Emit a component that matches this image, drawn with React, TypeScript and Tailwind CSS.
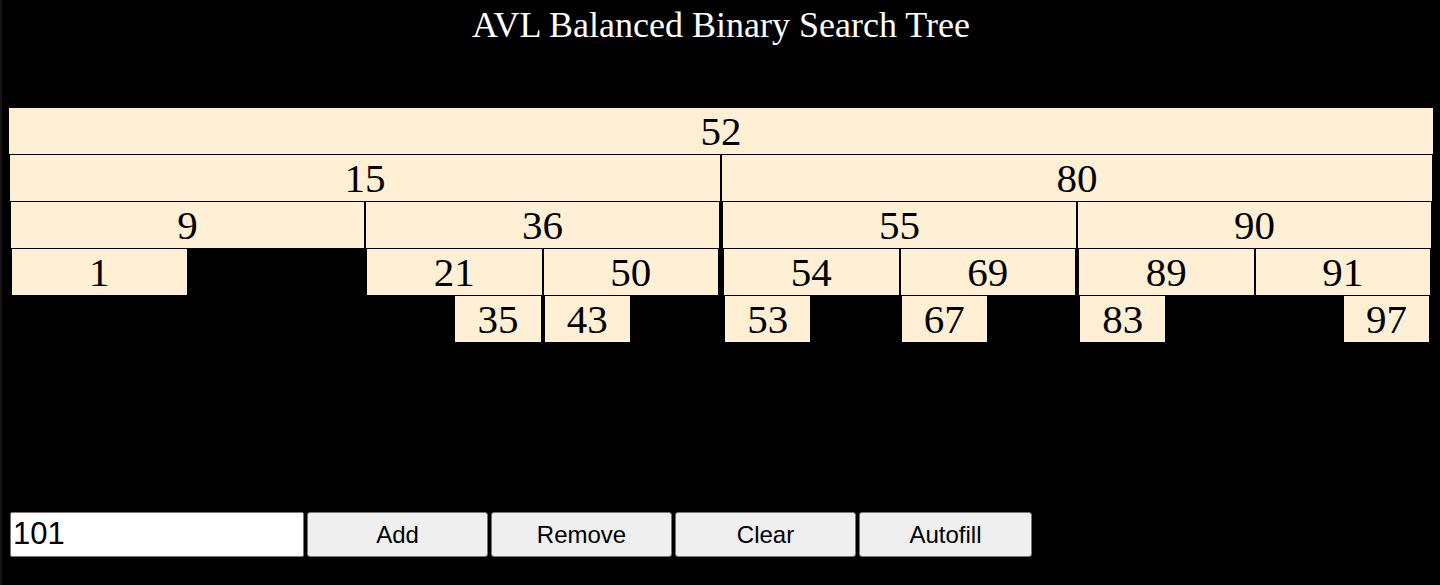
import React from "react";

type T = { v: number; l?: T; r?: T };

const tree: T = {
  v: 52,
  l: {
    v: 15,
    l: { v: 9, l: { v: 1 } },
    r: {
      v: 36,
      l: { v: 21, r: { v: 35 } },
      r: { v: 50, l: { v: 43 } },
    },
  },
  r: {
    v: 80,
    l: {
      v: 55,
      l: { v: 54, l: { v: 53 } },
      r: { v: 69, l: { v: 67 } },
    },
    r: {
      v: 90,
      l: { v: 89, l: { v: 83 } },
      r: { v: 91, r: { v: 97 } },
    },
  },
};

function Label({ v }: { v: number }) {
  return (
    <div className="h-[46px] bg-[#ffefd5] text-center text-[41px] leading-[46px] text-black">
      {v}
    </div>
  );
}

function Children({ n }: { n: T }) {
  if (!n.l && !n.r) return null;
  return (
    <div className="flex">
      {n.l ? <Node n={n.l} /> : <div className="w-1/2" />}
      {n.r ? <Node n={n.r} /> : <div className="w-1/2" />}
    </div>
  );
}

function Node({ n }: { n: T }) {
  return (
    <div className="w-1/2 border border-black">
      <Label v={n.v} />
      <Children n={n} />
    </div>
  );
}

export default function App() {
  return (
    <div
      className="w-[1440px] h-[585px] bg-black border-l-2 border-[#161616] overflow-hidden"
      style={{ fontFamily: '"Liberation Serif", "Times New Roman", serif' }}
    >
      <div className="h-[107px] pt-[5px] text-center text-white text-[36px] leading-[40px]">
        AVL Balanced Binary Search Tree
      </div>
      <div className="h-[405px]">
        <div className="ml-[6px] w-[1426px] border border-black">
          <Label v={tree.v} />
          <Children n={tree} />
        </div>
      </div>
      <div
        className="ml-[8px] flex gap-[3px] h-[45px]"
        style={{ fontFamily: '"Liberation Sans", Arial, sans-serif' }}
      >
        <input
          readOnly
          value="101"
          className="w-[294px] h-[45px] bg-white border border-[#767676] rounded-[2px] px-[2px] text-[31px] text-black outline-none"
          style={{ fontFamily: '"Liberation Sans", Arial, sans-serif' }}
        />
        <button className="w-[181px] h-[45px] bg-[#efefef] border border-[#767676] rounded-[3px] text-[24px] text-black">
          Add
        </button>
        <button className="w-[181px] h-[45px] bg-[#efefef] border border-[#767676] rounded-[3px] text-[24px] text-black">
          Remove
        </button>
        <button className="w-[181px] h-[45px] bg-[#efefef] border border-[#767676] rounded-[3px] text-[24px] text-black">
          Clear
        </button>
        <button className="w-[173px] h-[45px] bg-[#efefef] border border-[#767676] rounded-[3px] text-[24px] text-black">
          Autofill
        </button>
      </div>
    </div>
  );
}
